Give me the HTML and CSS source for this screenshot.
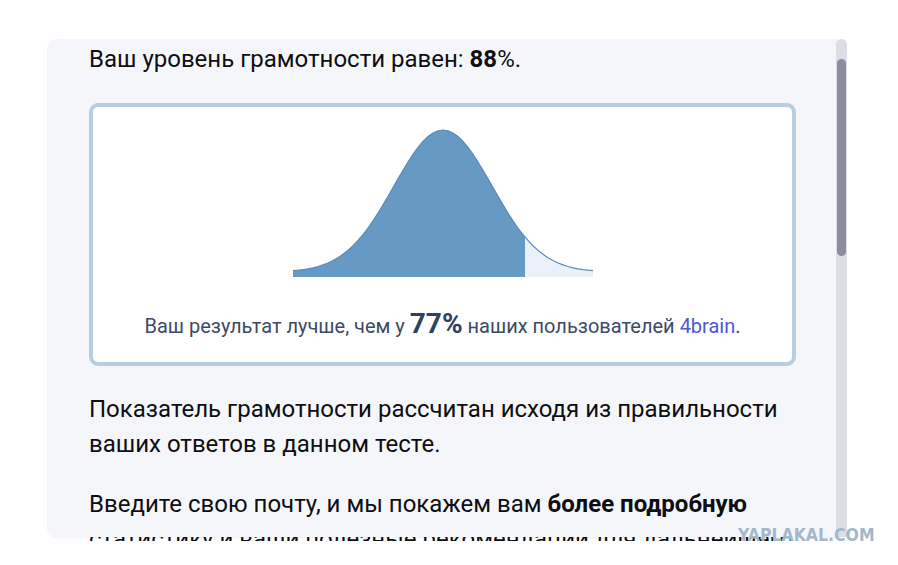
FILE: index.html
```html
<!DOCTYPE html>
<html>
<head>
<title>Результат теста</title>
<link rel="stylesheet" href="styles.css">
</head>
<body>

<div class="frame">
  <div class="card">
    <div class="content">
      <p class="score">Ваш уровень грамотности равен: <b>88</b>%.</p>

      <div class="chart-box">
        <svg class="curve" width="300" height="148" viewBox="0 -1 300 148">
          <path class="curve-done" d="M0 147 L0 140.69 L5 140.22 L10 139.6 L15 138.81 L20 137.8 L25 136.52 L30 134.93 L35 132.96 L40 130.57 L45 127.7 L50 124.31 L55 120.32 L60 115.72 L65 110.46 L70 104.54 L75 97.99 L80 90.82 L85 83.08 L90 74.9 L95 66.37 L100 57.62 L105 48.86 L110 40.24 L115 31.97 L120 24.27 L125 17.34 L130 11.35 L135 6.51 L140 2.92 L145 0.74 L150 0 L155 0.74 L160 2.92 L165 6.51 L170 11.35 L175 17.34 L180 24.27 L185 31.97 L190 40.24 L195 48.86 L200 57.62 L205 66.37 L210 74.9 L215 83.08 L220 90.82 L225 97.99 L230 104.54 L232 106.98 L232 147 Z"/>
          <path class="curve-rest" d="M232 147 L232 106.98 L235 110.46 L240 115.72 L245 120.32 L250 124.31 L255 127.7 L260 130.57 L265 132.96 L270 134.93 L275 136.52 L280 137.8 L285 138.81 L290 139.6 L295 140.22 L300 140.69 L300 147 Z"/>
          <path class="curve-line" d="M0 140.69 L5 140.22 L10 139.6 L15 138.81 L20 137.8 L25 136.52 L30 134.93 L35 132.96 L40 130.57 L45 127.7 L50 124.31 L55 120.32 L60 115.72 L65 110.46 L70 104.54 L75 97.99 L80 90.82 L85 83.08 L90 74.9 L95 66.37 L100 57.62 L105 48.86 L110 40.24 L115 31.97 L120 24.27 L125 17.34 L130 11.35 L135 6.51 L140 2.92 L145 0.74 L150 0 L155 0.74 L160 2.92 L165 6.51 L170 11.35 L175 17.34 L180 24.27 L185 31.97 L190 40.24 L195 48.86 L200 57.62 L205 66.37 L210 74.9 L215 83.08 L220 90.82 L225 97.99 L230 104.54 L235 110.46 L240 115.72 L245 120.32 L250 124.31 L255 127.7 L260 130.57 L265 132.96 L270 134.93 L275 136.52 L280 137.8 L285 138.81 L290 139.6 L295 140.22 L300 140.69"/>
        </svg>
        <p class="caption">Ваш результат лучше, чем у <span class="percent">77%</span> наших пользователей <a href="#">4brain</a>.</p>
      </div>

      <p class="text">Показатель грамотности рассчитан исходя из правильности ваших ответов в данном тесте.</p>

      <p class="text">Введите свою почту, и мы покажем вам <b>более подробную</b> статистику и ваши полезные рекомендации для дальнейшего развития.</p>
    </div>
    <div class="scrollbar"><div class="thumb"></div></div>
  </div>
</div>

<div class="watermark">YAPLAKAL.COM</div>

</body>
</html>
```

FILE: styles.css
```css
body {
  font-family: Roboto, "Liberation Sans", sans-serif;
  margin: 0;
  padding: 0;
  background-color: #fff;
  color: #0e0e12;
}

.frame {
  width: 800px;
  height: 502px;
  margin: 39px 0 0 47px;
  overflow: hidden;
}

.card {
  position: relative;
  display: flex;
  height: 498px;
  background-color: #f5f6fa;
  border-radius: 10px;
  box-shadow: 0 1px 2px rgba(0, 0, 0, 0.06);
}

/* bottom edge of the scroll area hides the half-scrolled line */
.card::after {
  content: "";
  position: absolute;
  left: 0;
  right: 11px;
  bottom: 0;
  height: 9px;
  background-color: #f5f6fa;
  border-radius: 0 0 0 10px;
}

.content {
  flex: 1;
  padding: 3px 40px 0 42px;
}

.score {
  margin: 0;
  font-size: 24px;
  line-height: 35px;
}

.chart-box {
  margin-top: 26px;
  padding: 22px 0 21px;
  background-color: #fff;
  border: 4px solid #b7cde0;
  border-radius: 9px;
  text-align: center;
}

.curve {
  display: block;
  margin: 0 auto;
}

.curve-done {
  fill: #6699c3;
}

.curve-rest {
  fill: #eaf1f8;
}

.curve-line {
  fill: none;
  stroke: #5a8bb8;
  stroke-width: 1.2;
}

.caption {
  margin: 34px 0 0;
  font-size: 20px;
  line-height: 30px;
  color: #3d4a64;
}

.percent {
  font-size: 28px;
  line-height: 24px;
  font-weight: bold;
  color: #2d4263;
}

.caption a {
  color: #4a5ad8;
  text-decoration: none;
}

.text {
  margin: 26px 0 0;
  font-size: 24px;
  line-height: 35px;
}

.text + .text {
  margin-top: 25px;
}

.scrollbar {
  width: 11px;
  height: 498px;
  background-color: #dcdde5;
  border-radius: 6px 6px 0 0;
}

.thumb {
  width: 9px;
  height: 197px;
  margin: 20px 0 0 1px;
  background-color: #8b8ca2;
  border-radius: 5px;
}

.watermark {
  position: absolute;
  left: 738px;
  top: 526px;
  font-family: "DejaVu Sans Condensed", "DejaVu Sans", sans-serif;
  font-stretch: condensed;
  font-weight: bold;
  font-size: 17.5px;
  line-height: 18px;
  color: #a3b8cc;
}
```
